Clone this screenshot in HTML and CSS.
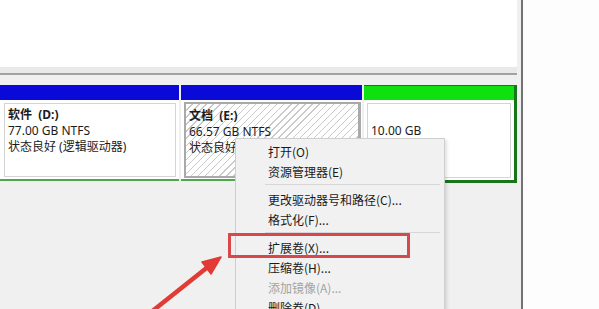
FILE: index.html
```html
<!DOCTYPE html>
<html lang="zh-CN">
<head>
<meta charset="utf-8">
<title>磁盘管理</title>
<link rel="stylesheet" href="styles.css">
</head>
<body>
<div class="screen">
  <div class="main">
    <div class="listview"></div>
    <div class="list-edge"></div>
    <div class="disk-area">
      <div class="disk-row">
        <div class="part logical">
          <div class="part-head blue"></div>
          <div class="part-body">
            <div class="vol">
              <div class="vol-name">软件&nbsp;&nbsp;(D:)</div>
              <div>77.00 GB NTFS</div>
              <div>状态良好 (逻辑驱动器)</div>
            </div>
          </div>
        </div>
        <div class="part logical selected">
          <div class="part-head blue"></div>
          <div class="part-body">
            <div class="vol hatched">
              <div class="vol-name">文档&nbsp;&nbsp;(E:)</div>
              <div>66.57 GB NTFS</div>
              <div>状态良好 (逻辑驱动器)</div>
            </div>
          </div>
        </div>
        <div class="part free">
          <div class="part-head green"></div>
          <div class="part-body">
            <div class="vol">
              <div class="vol-name">&nbsp;</div>
              <div>10.00 GB</div>
              <div>可用空间</div>
            </div>
          </div>
        </div>
      </div>
    </div>
  </div>
  <div class="side"></div>

  <div class="menu">
    <div class="menu-item">打开(O)</div>
    <div class="menu-item">资源管理器(E)</div>
    <div class="menu-sep"></div>
    <div class="menu-item">更改驱动器号和路径(C)...</div>
    <div class="menu-item">格式化(F)...</div>
    <div class="menu-sep"></div>
    <div class="menu-item">扩展卷(X)...</div>
    <div class="menu-item">压缩卷(H)...</div>
    <div class="menu-item disabled">添加镜像(A)...</div>
    <div class="menu-item">删除卷(D)...</div>
  </div>

  <div class="highlight"></div>

  <svg class="arrow" width="599" height="309" viewBox="0 0 599 309">
    <line x1="150" y1="313" x2="209" y2="266" stroke="#e23a35" stroke-width="4.5" stroke-linecap="round"/>
    <polygon points="221,257 202,262 211,274" fill="#e23a35" stroke="#e23a35" stroke-width="1.5" stroke-linejoin="round"/>
  </svg>
</div>
</body>
</html>
```

FILE: styles.css
```css
* { box-sizing: border-box; }

html, body {
  margin: 0;
  padding: 0;
  width: 599px;
  height: 309px;
  overflow: hidden;
  background: #fcfcfc;
}

.screen {
  position: relative;
  display: flex;
  width: 599px;
  height: 309px;
  overflow: hidden;
  font-family: "Noto Sans", "Noto Sans CJK SC", sans-serif;
  font-size: 12px;
  color: #1b1b1b;
}

.main {
  width: 523px;
  flex: none;
  display: flex;
  flex-direction: column;
  background: #f0f0f0;
  border-right: 2px solid #727272;
}

.listview {
  width: 517px;
  height: 67px;
  background: #ffffff;
}

.list-edge {
  width: 517px;
  height: 8px;
  background: #e9e9e9;
  border-bottom: 2px solid #a2a2a2;
}

.disk-area {
  padding-top: 10px;
  flex: 1;
}

.disk-row {
  display: flex;
  align-items: flex-start;
  gap: 2px;
}

.part {
  display: flex;
  flex-direction: column;
  background: #ffffff;
}

.part.logical {
  border-bottom: 2px solid #4fa64f;
}

.part:nth-child(1) { width: 179px; }
.part:nth-child(2) { width: 181px; }
.part.free {
  width: 153px;
  border-right: 3px solid #17761a;
  border-bottom: 3px solid #17761a;
  border-top: 1px solid #17761a;
}

.part-head {
  height: 15px;
}
.part-head.blue { background: #0a0ad8; }
.part-head.green { height: 14px; background: #0fe00f; }

.part-body {
  height: 79px;
  padding: 3px 3px 2px 4px;
  display: flex;
}

.part.free .part-body {
  height: 80px;
  padding: 3px 3px 2px 3px;
}

.vol {
  flex: 1;
  border: 1px solid #d4d4d4;
  padding: 3px 3px;
  line-height: 16px;
  white-space: nowrap;
  overflow: hidden;
}

.vol-name { font-weight: bold; }

.part.selected .part-body {
  padding: 2px 1px 1px 3px;
}

.vol.hatched {
  border: 2px solid #a9a9a9;
  border-right-width: 3px;
  padding: 4px 3px;
  background: repeating-linear-gradient(135deg, #ffffff 0 4px, #c9c9c9 4px 5px);
}

.side {
  flex: 1;
  background: #fdfdfd;
}

.menu {
  position: absolute;
  left: 235px;
  top: 138px;
  width: 210px;
  height: 190px;
  background: #f1f1f1;
  border: 1px solid #cfcfcf;
  box-shadow: 2px 2px 3px rgba(0, 0, 0, 0.12);
  padding-top: 3px;
  font-family: "Noto Sans CJK SC", "Noto Sans", sans-serif;
}

.menu-item {
  height: 20px;
  line-height: 20px;
  padding-left: 32px;
  white-space: nowrap;
  color: #1a1a1a;
}

.menu-item.disabled { color: #a3a3a3; }

.menu-sep {
  height: 8px;
  margin-left: 29px;
  margin-right: 4px;
  background: linear-gradient(#d7d7d7, #d7d7d7) no-repeat 0 2px / 100% 1px;
}

.highlight {
  position: absolute;
  left: 228px;
  top: 233px;
  width: 182px;
  height: 25px;
  border: 3px solid #d7484b;
}

.arrow {
  position: absolute;
  left: 0;
  top: 0;
  pointer-events: none;
}
```
